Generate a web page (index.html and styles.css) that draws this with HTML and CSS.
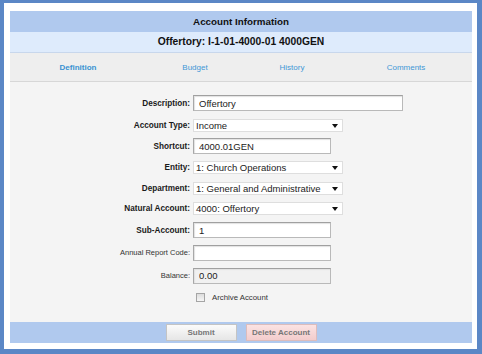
FILE: index.html
```html
<!DOCTYPE html>
<html>
<head>
<meta charset="utf-8">
<link rel="stylesheet" href="styles.css">
</head>
<body>
<div class="frame">
  <div class="panel">
    <div class="title">Account Information</div>
    <div class="subtitle">Offertory: I-1-01-4000-01 4000GEN</div>
    <nav class="tabs">
      <a class="tab active">Definition</a>
      <a class="tab">Budget</a>
      <a class="tab">History</a>
      <a class="tab">Comments</a>
    </nav>
    <div class="form">
      <label class="lbl strong">Description:</label>
      <div class="field"><input class="input w-lg" value="Offertory"></div>

      <label class="lbl strong">Account Type:</label>
      <div class="field"><div class="select"><span>Income</span><svg class="arrow" width="6" height="4" viewBox="0 0 6 4"><path d="M0 0H6L3 4Z" fill="#111"/></svg></div></div>

      <label class="lbl strong">Shortcut:</label>
      <div class="field"><input class="input w-md" value="4000.01GEN"></div>

      <label class="lbl strong">Entity:</label>
      <div class="field"><div class="select"><span>1: Church Operations</span><svg class="arrow" width="6" height="4" viewBox="0 0 6 4"><path d="M0 0H6L3 4Z" fill="#111"/></svg></div></div>

      <label class="lbl strong">Department:</label>
      <div class="field"><div class="select"><span>1: General and Administrative</span><svg class="arrow" width="6" height="4" viewBox="0 0 6 4"><path d="M0 0H6L3 4Z" fill="#111"/></svg></div></div>

      <label class="lbl strong">Natural Account:</label>
      <div class="field"><div class="select"><span>4000: Offertory</span><svg class="arrow" width="6" height="4" viewBox="0 0 6 4"><path d="M0 0H6L3 4Z" fill="#111"/></svg></div></div>

      <label class="lbl strong">Sub-Account:</label>
      <div class="field"><input class="input w-md" value="1"></div>

      <label class="lbl">Annual Report Code:</label>
      <div class="field"><input class="input w-md" value=""></div>

      <label class="lbl">Balance:</label>
      <div class="field"><input class="input w-md disabled" value="0.00" disabled></div>

      <span></span>
      <div class="field check"><input type="checkbox" class="cb"><span class="cb-label">Archive Account</span></div>
    </div>
    <div class="actions">
      <button class="btn">Submit</button>
      <button class="btn danger">Delete Account</button>
    </div>
  </div>
</div>
</body>
</html>
```

FILE: styles.css
```css
* { box-sizing: border-box; }
html, body { margin: 0; padding: 0; }
body {
  font-family: "Liberation Sans", Arial, sans-serif;
  color: #222;
  background: #fff;
}
.frame {
  width: 482px;
  height: 354px;
  border-style: solid;
  border-color: #5b87c6;
  border-width: 3px 5px 5px 4px;
  background: #fff;
  padding: 8px 5px 6px 6px;
}
.panel {
  height: 100%;
  display: flex;
  flex-direction: column;
}
.title {
  height: 21px;
  line-height: 21px;
  background: #b0c9ee;
  text-align: center;
  font-weight: bold;
  font-size: 9.8px;
  color: #111;
}
.subtitle {
  height: 21px;
  line-height: 20px;
  background: #deebfc;
  border-bottom: 1px solid #c8d7ec;
  text-align: center;
  font-weight: bold;
  font-size: 10.3px;
  color: #111;
}
.tabs {
  height: 29px;
  background: #eeeeee;
  border-bottom: 1px solid #d7d7d7;
  display: grid;
  grid-template-columns: 136px 98px 96px 132px;
  align-items: center;
}
.tab {
  text-align: center;
  font-size: 8px;
  color: #3f97d6;
  padding-top: 1px;
}
.tab.active { font-weight: bold; color: #3a92d2; }
.form {
  flex: 1;
  background: #f4f4f4;
  padding-top: 10px;
  display: grid;
  grid-template-columns: 180px 1fr;
  column-gap: 3px;
  grid-template-rows: 22px 22px 20px 23px 19px 21px 22px 23px 23px 21px;
  align-items: center;
  align-content: start;
}
.lbl {
  text-align: right;
  font-size: 7.5px;
  color: #333;
}
.lbl.strong {
  font-weight: bold;
  font-size: 8.2px;
  color: #1a1a1a;
}
.field { display: flex; align-items: center; }
.input {
  height: 16px;
  border: 1px solid #b9b9b9;
  border-top-color: #a0a0a0;
  border-left-color: #a8a8a8;
  box-shadow: inset 1px 1px 1px #e2e2e2;
  background: #fff;
  font-family: "Liberation Sans", Arial, sans-serif;
  font-size: 9.5px;
  color: #222;
  padding: 0 0 0 5px;
  outline: none;
}
.w-lg { width: 210px; }
.w-md { width: 138px; }
.input.disabled { background: #f1f1f1; color: #222; }
.select {
  position: relative;
  width: 150px;
  height: 13px;
  background: #fff;
  border: 1px solid #dedede;
  font-size: 9.5px;
  line-height: 11px;
  padding-left: 2px;
  color: #222;
  white-space: nowrap;
  overflow: hidden;
}
.select .arrow {
  position: absolute;
  right: 4px;
  top: 4px;
}
.check { padding-left: 3px; }
.cb {
  appearance: none;
  -webkit-appearance: none;
  margin: 0;
  width: 9px;
  height: 9px;
  border: 1px solid #a5a5a5;
  background: linear-gradient(#dcdcdc, #f6f6f6);
}
.cb-label {
  margin-left: 7px;
  font-size: 7.8px;
  color: #333;
}
.actions {
  height: 21px;
  background: #b0c9ee;
  display: flex;
  justify-content: center;
  align-items: center;
  gap: 9px;
}
.btn {
  width: 71px;
  height: 17px;
  margin: 0;
  padding: 0;
  border: 1px solid #c4c4c4;
  background: linear-gradient(#fbfbfb, #e6e6e6);
  font-family: "Liberation Sans", Arial, sans-serif;
  font-weight: bold;
  font-size: 8px;
  color: #777;
}
.btn.danger {
  background: linear-gradient(#fbe3e3, #f3cccc);
  border-color: #dcbcbc;
}
```
